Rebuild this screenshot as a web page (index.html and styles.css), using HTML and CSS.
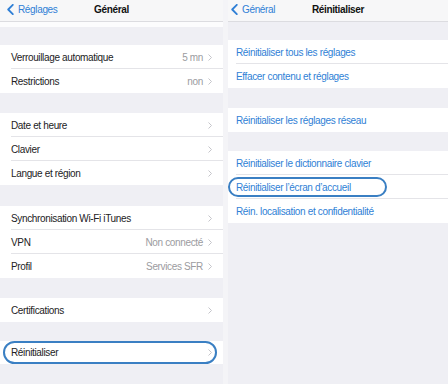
FILE: index.html
```html
<!DOCTYPE html>
<html lang="fr">
<head>
<meta charset="utf-8">
<title>Réglages</title>
<link rel="stylesheet" href="styles.css">
</head>
<body>
<div class="screen">
  <section class="panel left">
    <header class="nav">
      <div class="back">
        <svg class="back-chev" width="7" height="11" viewBox="0 0 7 11"><polyline points="5.8,0.8 1.2,5.5 5.8,10.2" fill="none" stroke="#2f7fd6" stroke-width="1.8" stroke-linecap="round" stroke-linejoin="round"/></svg>
        <span>Réglages</span>
      </div>
      <h1 class="title">Général</h1>
      <div></div>
    </header>
    <div class="under-nav"></div>
    <div class="gap gap-top-l"></div>
    <div class="group">
      <div class="row"><span class="label">Verrouillage automatique</span><span class="value">5 mn</span><svg class="chev" width="4" height="7" viewBox="0 0 4 7"><polyline points="0.5,0.5 3.5,3.5 0.5,6.5" fill="none" stroke="#c5c5ca" stroke-width="1"/></svg></div>
      <div class="row"><span class="label">Restrictions</span><span class="value">non</span><svg class="chev" width="4" height="7" viewBox="0 0 4 7"><polyline points="0.5,0.5 3.5,3.5 0.5,6.5" fill="none" stroke="#c5c5ca" stroke-width="1"/></svg></div>
    </div>
    <div class="gap g20"></div>
    <div class="group">
      <div class="row"><span class="label">Date et heure</span><svg class="chev" width="4" height="7" viewBox="0 0 4 7"><polyline points="0.5,0.5 3.5,3.5 0.5,6.5" fill="none" stroke="#c5c5ca" stroke-width="1"/></svg></div>
      <div class="row"><span class="label">Clavier</span><svg class="chev" width="4" height="7" viewBox="0 0 4 7"><polyline points="0.5,0.5 3.5,3.5 0.5,6.5" fill="none" stroke="#c5c5ca" stroke-width="1"/></svg></div>
      <div class="row"><span class="label">Langue et région</span><svg class="chev" width="4" height="7" viewBox="0 0 4 7"><polyline points="0.5,0.5 3.5,3.5 0.5,6.5" fill="none" stroke="#c5c5ca" stroke-width="1"/></svg></div>
    </div>
    <div class="gap g21"></div>
    <div class="group">
      <div class="row"><span class="label">Synchronisation Wi-Fi iTunes</span><svg class="chev" width="4" height="7" viewBox="0 0 4 7"><polyline points="0.5,0.5 3.5,3.5 0.5,6.5" fill="none" stroke="#c5c5ca" stroke-width="1"/></svg></div>
      <div class="row"><span class="label">VPN</span><span class="value">Non connecté</span><svg class="chev" width="4" height="7" viewBox="0 0 4 7"><polyline points="0.5,0.5 3.5,3.5 0.5,6.5" fill="none" stroke="#c5c5ca" stroke-width="1"/></svg></div>
      <div class="row"><span class="label">Profil</span><span class="value">Services SFR</span><svg class="chev" width="4" height="7" viewBox="0 0 4 7"><polyline points="0.5,0.5 3.5,3.5 0.5,6.5" fill="none" stroke="#c5c5ca" stroke-width="1"/></svg></div>
    </div>
    <div class="gap g20"></div>
    <div class="group">
      <div class="row"><span class="label">Certifications</span><svg class="chev" width="4" height="7" viewBox="0 0 4 7"><polyline points="0.5,0.5 3.5,3.5 0.5,6.5" fill="none" stroke="#c5c5ca" stroke-width="1"/></svg></div>
    </div>
    <div class="gap g19"></div>
    <div class="group">
      <div class="row circled-row">
        <div class="oval oval-left"><span class="label">Réinitialiser</span><svg class="chev" width="4" height="7" viewBox="0 0 4 7"><polyline points="0.5,0.5 3.5,3.5 0.5,6.5" fill="none" stroke="#c5c5ca" stroke-width="1"/></svg></div>
      </div>
    </div>
  </section>

  <div class="divider"></div>

  <section class="panel right">
    <header class="nav nav-right">
      <div class="back">
        <svg class="back-chev" width="7" height="11" viewBox="0 0 7 11"><polyline points="5.8,0.8 1.2,5.5 5.8,10.2" fill="none" stroke="#2f7fd6" stroke-width="1.8" stroke-linecap="round" stroke-linejoin="round"/></svg>
        <span>Général</span>
      </div>
      <h1 class="title">Réinitialiser</h1>
      <div></div>
    </header>
    <div class="gap gap-top-r"></div>
    <div class="group">
      <div class="row link">Réinitialiser tous les réglages</div>
      <div class="row link">Effacer contenu et réglages</div>
    </div>
    <div class="gap g20"></div>
    <div class="group">
      <div class="row link">Réinitialiser les réglages réseau</div>
    </div>
    <div class="gap g19"></div>
    <div class="group">
      <div class="row link">Réinitialiser le dictionnaire clavier</div>
      <div class="row link circled-row-r"><span class="oval oval-right">Réinitialiser l’écran d’accueil</span></div>
      <div class="row link">Réin. localisation et confidentialité</div>
    </div>
  </section>
</div>
</body>
</html>
```

FILE: styles.css
```css
* { box-sizing: border-box; }

html, body {
  margin: 0;
  padding: 0;
}

body {
  width: 448px;
  height: 384px;
  overflow: hidden;
  background: #efeff4;
  font-family: "Liberation Sans", Arial, sans-serif;
  font-size: 10px;
  letter-spacing: -0.35px;
  color: #222224;
}

.screen {
  display: flex;
  height: 384px;
}

.panel {
  display: flex;
  flex-direction: column;
  background: #efeff4;
}

.left { width: 223px; }
.right { flex: 1; }

.divider {
  width: 5px;
  background: #f4f4f7;
}

.nav {
  height: 22px;
  flex: none;
  display: grid;
  grid-template-columns: 1fr auto 1fr;
  align-items: center;
  background: #f7f7f8;
  border-bottom: 1px solid #dcdce0;
  padding-bottom: 2px;
}

.back {
  display: flex;
  align-items: center;
  gap: 4px;
  padding-left: 7px;
  color: #2f7fd6;
}

.nav-right .back { padding-left: 3px; }

.back-chev { flex: none; }

.title {
  margin: 0;
  font-size: 10px;
  font-weight: bold;
  color: #111;
}

.under-nav {
  height: 5px;
  background: #fcfcfd;
  flex: none;
}

.gap { flex: none; }
.gap-top-l { height: 18px; }
.gap-top-r { height: 18px; }
.g19 { height: 19px; }
.g20 { height: 20px; }
.g21 { height: 21px; }

.group {
  background: #fff;
  flex: none;
}

.row {
  height: 24px;
  display: flex;
  align-items: center;
  padding: 0 11px;
  background: linear-gradient(#e4e4e8, #e4e4e8) 11px 100% / 100% 1px no-repeat, #fff;
}

.row:last-child { background: #fff; }

.label { flex: 1; white-space: nowrap; }

.value {
  color: #9b9ba0;
  margin-right: 5px;
  white-space: nowrap;
}

.chev { flex: none; }

.right .row {
  padding: 0 8px;
  background: linear-gradient(#e4e4e8, #e4e4e8) 8px 100% / 100% 1px no-repeat, #fff;
}

.right .row:last-child { background: #fff; }

.link { color: #2f7fd6; }

.circled-row {
  padding: 0 6px 0 3px;
  height: 23px;
}

.oval {
  border: 2px solid #3a7fc3;
  border-radius: 12px;
  display: flex;
  align-items: center;
}

.oval-left {
  flex: 1;
  height: 23px;
  padding: 0 3px 0 6px;
}

.right .circled-row-r { padding-left: 0; }

.oval-right {
  width: 159px;
  height: 20px;
  padding-left: 6px;
}
```
